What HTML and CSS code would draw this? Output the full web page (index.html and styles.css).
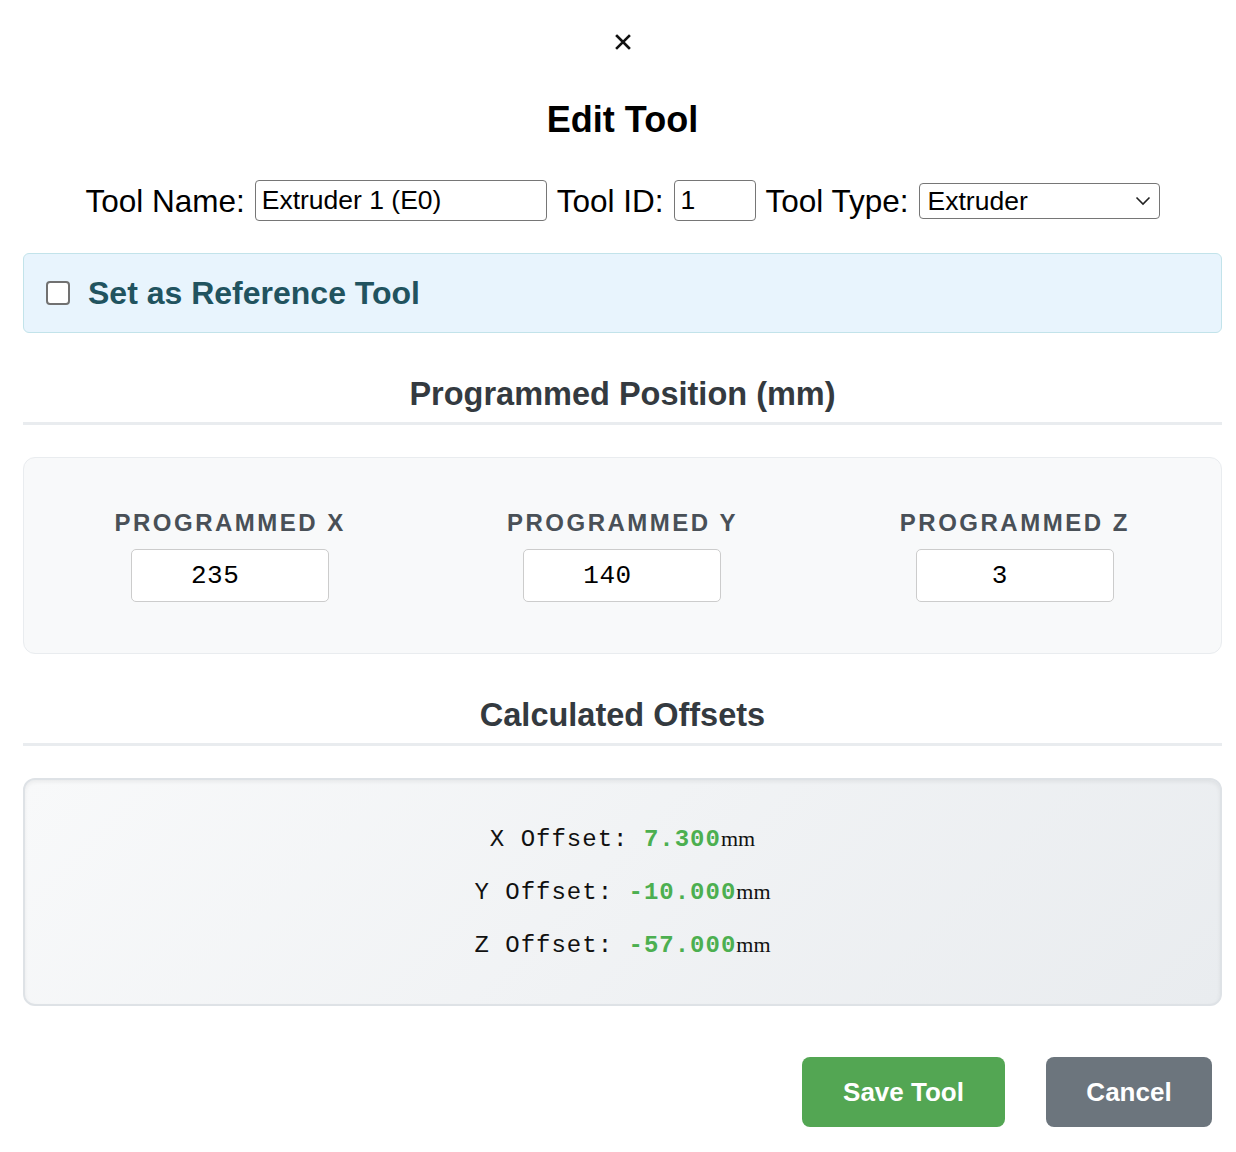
FILE: index.html
```html
<!DOCTYPE html>
<html lang="en">
<head>
<meta charset="utf-8">
<title>Edit Tool</title>
<link rel="stylesheet" href="styles.css">
</head>
<body>
<div class="modal">
  <div class="close-row">
    <button class="close-btn" aria-label="Close">
      <svg width="16" height="16" viewBox="0 0 16 16"><path d="M2 2 L14 14 M14 2 L2 14" stroke="#111" stroke-width="2.6" stroke-linecap="square" fill="none"/></svg>
    </button>
  </div>
  <h2 class="title">Edit Tool</h2>

  <div class="form-row">
    <label class="field-label">Tool Name:</label>
    <input class="text-input name-input" type="text" value="Extruder 1 (E0)">
    <label class="field-label">Tool ID:</label>
    <input class="text-input id-input" type="text" value="1">
    <label class="field-label">Tool Type:</label>
    <div class="select-wrap">
      <select class="type-select"><option>Extruder</option></select>
      <svg class="chevron" width="16" height="10" viewBox="0 0 16 10"><path d="M1.5 1.5 L8 8 L14.5 1.5" stroke="#222" stroke-width="1.6" fill="none"/></svg>
    </div>
  </div>

  <div class="ref-box">
    <span class="checkbox"></span>
    <span class="ref-label">Set as Reference Tool</span>
  </div>

  <h3 class="section-title">Programmed Position (mm)</h3>

  <div class="position-panel">
    <div class="pos-col">
      <div class="pos-label">PROGRAMMED X</div>
      <input class="pos-input" type="text" value="235">
    </div>
    <div class="pos-col">
      <div class="pos-label">PROGRAMMED Y</div>
      <input class="pos-input" type="text" value="140">
    </div>
    <div class="pos-col">
      <div class="pos-label">PROGRAMMED Z</div>
      <input class="pos-input" type="text" value="3">
    </div>
  </div>

  <h3 class="section-title">Calculated Offsets</h3>

  <div class="offsets-box">
    <div class="offset-line">X Offset: <span class="offset-value">7.300</span><span class="unit">mm</span></div>
    <div class="offset-line">Y Offset: <span class="offset-value">-10.000</span><span class="unit">mm</span></div>
    <div class="offset-line">Z Offset: <span class="offset-value">-57.000</span><span class="unit">mm</span></div>
  </div>

  <div class="actions">
    <button class="btn btn-save">Save Tool</button>
    <button class="btn btn-cancel">Cancel</button>
  </div>
</div>
</body>
</html>
```

FILE: styles.css
```css
html, body {
  margin: 0;
  padding: 0;
  background: #ffffff;
}

body {
  font-family: "Liberation Sans", Arial, sans-serif;
  color: #000;
}

.modal {
  padding: 0 14px 0 23px;
  width: 1199px;
  box-sizing: content-box;
}

.close-row {
  display: flex;
  justify-content: center;
  padding-top: 34px;
}

.close-btn {
  border: none;
  background: none;
  padding: 0;
  width: 16px;
  height: 16px;
  display: block;
  cursor: pointer;
}

.close-btn svg {
  display: block;
}

.title {
  margin: 48px 0 0;
  text-align: center;
  font-size: 36px;
  line-height: 44px;
  font-weight: 700;
  color: #000;
}

.form-row {
  margin-top: 38px;
  display: flex;
  justify-content: center;
  align-items: center;
  gap: 10px;
  height: 41px;
}

.field-label {
  font-size: 31.5px;
  line-height: 36px;
  color: #000;
}

.text-input {
  box-sizing: border-box;
  height: 41px;
  border: 1.5px solid #767676;
  border-radius: 4px;
  padding: 0 6px;
  font-family: "Liberation Sans", Arial, sans-serif;
  font-size: 26.5px;
  color: #000;
  background: #fff;
  outline: none;
}

.name-input { width: 292px; }
.id-input { width: 82px; }

.select-wrap {
  position: relative;
  width: 241px;
  height: 36px;
}

.type-select {
  appearance: none;
  -webkit-appearance: none;
  box-sizing: border-box;
  width: 241px;
  height: 36px;
  border: 1.5px solid #767676;
  border-radius: 4px;
  background: #fff;
  padding: 0 8px;
  font-family: "Liberation Sans", Arial, sans-serif;
  font-size: 26.5px;
  color: #000;
}

.chevron {
  position: absolute;
  right: 9px;
  top: 13px;
  pointer-events: none;
}

.ref-box {
  margin-top: 32px;
  box-sizing: border-box;
  height: 80px;
  background: #e8f4fd;
  border: 1px solid #c2e3ea;
  border-radius: 6px;
  display: flex;
  align-items: center;
  padding-left: 22px;
  gap: 18px;
}

.checkbox {
  box-sizing: border-box;
  width: 24px;
  height: 24px;
  border: 2px solid #717171;
  border-radius: 4px;
  background: #fff;
  display: block;
}

.ref-label {
  font-size: 32px;
  font-weight: 700;
  color: #21535f;
}

.section-title {
  margin: 42px 0 0;
  padding-bottom: 9px;
  border-bottom: 3px solid #e9ecef;
  text-align: center;
  font-size: 32.5px;
  line-height: 38px;
  font-weight: 700;
  color: #343a40;
}

.position-panel {
  margin-top: 32px;
  box-sizing: border-box;
  height: 197px;
  background: #f8f9fa;
  border: 1px solid #e9ecef;
  border-radius: 12px;
  padding: 30px 20px;
  display: grid;
  grid-template-columns: 1fr 1fr 1fr;
  gap: 20px;
}

.pos-col {
  display: flex;
  flex-direction: column;
  align-items: center;
  padding-top: 20px;
}

.pos-label {
  font-size: 24px;
  line-height: 29px;
  font-weight: 700;
  letter-spacing: 2.5px;
  color: #495057;
}

.pos-input {
  margin-top: 12px;
  box-sizing: border-box;
  width: 198px;
  height: 53px;
  border: 1.5px solid #cccccc;
  border-radius: 5px;
  background: #fff;
  padding: 0 30px 0 0;
  text-align: center;
  font-family: "Liberation Mono", "Courier New", monospace;
  font-size: 26px;
  letter-spacing: 0.5px;
  color: #000;
  outline: none;
}

.offsets-box {
  margin-top: 32px;
  box-sizing: border-box;
  height: 228px;
  border: 2px solid #dee2e6;
  border-radius: 12px;
  background: linear-gradient(135deg, #f8f9fa 0%, #e9ecef 100%);
  box-shadow: inset 0 2px 4px rgba(0, 0, 0, 0.06);
  padding-top: 33px;
  text-align: center;
}

.offset-line {
  font-family: "Liberation Mono", "Courier New", monospace;
  font-size: 24px;
  line-height: 52px;
  letter-spacing: 1px;
  color: #111;
}

.offset-value {
  color: #4caf50;
  font-weight: 700;
}

.unit {
  font-family: "Liberation Serif", "Times New Roman", serif;
  font-size: 22px;
  letter-spacing: 0;
  color: #111;
}

.actions {
  margin-top: 51px;
  display: flex;
  justify-content: flex-end;
  gap: 41px;
  padding-right: 10px;
}

.btn {
  border: none;
  border-radius: 8px;
  height: 70px;
  padding: 0 40px;
  font-family: "Liberation Sans", Arial, sans-serif;
  font-size: 26px;
  font-weight: 700;
  color: #fff;
  cursor: pointer;
}

.btn-save {
  width: 203px;
  background: #53a653;
}

.btn-cancel {
  width: 166px;
  background: #6c757d;
}
```
